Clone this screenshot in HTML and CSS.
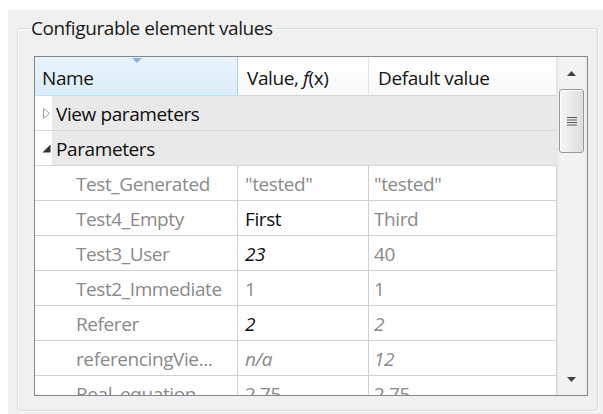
FILE: index.html
```html
<!DOCTYPE html>
<html lang="en">
<head>
<meta charset="utf-8">
<title>Configurable element values</title>
<link rel="stylesheet" href="styles.css">
</head>
<body>
<div class="window">
  <fieldset class="group">
    <legend class="group-title">Configurable element values</legend>
    <div class="group-body">
      <div class="tree">
        <div class="grid">
          <div class="hcell hcell-sorted">
            <svg class="sort-mark" width="10" height="5" viewBox="0 0 10 5"><path d="M0 0H10L5 5Z" fill="#8cb4d8"/></svg>
            <span>Name</span>
          </div>
          <div class="hcell"><span>Value, <i>f</i>(x)</span></div>
          <div class="hcell"><span>Default value</span></div>

          <div class="group-row">
            <span class="twisty">
              <svg width="9" height="13" viewBox="0 0 9 13"><path d="M1.5 1.5L7.5 6.5L1.5 11.5Z" fill="#fff" stroke="#9c9c9c"/></svg>
            </span>
            <span class="group-label">View parameters</span>
          </div>
          <div class="group-row">
            <span class="twisty">
              <svg width="9" height="9" viewBox="0 0 9 9"><path d="M8.5 0.5V8.5H0.5Z" fill="#333"/></svg>
            </span>
            <span class="group-label">Parameters</span>
          </div>

          <div class="cell name">Test_Generated</div>
          <div class="cell">"tested"</div>
          <div class="cell">"tested"</div>

          <div class="cell name">Test4_Empty</div>
          <div class="cell set">First</div>
          <div class="cell">Third</div>

          <div class="cell name">Test3_User</div>
          <div class="cell set"><i>23</i></div>
          <div class="cell">40</div>

          <div class="cell name">Test2_Immediate</div>
          <div class="cell">1</div>
          <div class="cell">1</div>

          <div class="cell name">Referer</div>
          <div class="cell set"><i>2</i></div>
          <div class="cell"><i>2</i></div>

          <div class="cell name">referencingVie...</div>
          <div class="cell"><i>n/a</i></div>
          <div class="cell"><i>12</i></div>

          <div class="cell name">Real_equation</div>
          <div class="cell">2.75</div>
          <div class="cell">2.75</div>
        </div>

        <div class="scrollbar">
          <div class="sb-button">
            <svg width="9" height="5" viewBox="0 0 9 5"><path d="M0 5L4.5 0L9 5Z" fill="#404040"/></svg>
          </div>
          <div class="sb-thumb">
            <svg width="10" height="9" viewBox="0 0 10 9">
              <path d="M0 0.5H10M0 3H10M0 5.5H10M0 8H10" stroke="#5a5a5a" stroke-width="1"/>
            </svg>
          </div>
          <div class="sb-track"></div>
          <div class="sb-button">
            <svg width="9" height="5" viewBox="0 0 9 5"><path d="M0 0L4.5 5L9 0Z" fill="#404040"/></svg>
          </div>
        </div>
      </div>
    </div>
  </fieldset>
</div>
</body>
</html>
```
FILE: styles.css
```css
html, body {
  margin: 0;
  height: 100%;
  overflow: hidden;
  background: #fff;
}

body {
  font-family: "Open Sans", "Segoe UI", "Noto Sans", sans-serif;
  font-size: 19px;
  font-weight: 500;
  letter-spacing: -0.4px;
  color: #1e1e1e;
}

/* dialog surface */
.window {
  margin: 10px 0 0 8px;
  height: 404px;
  box-sizing: border-box;
  padding: 5px 5px 3px 9px;
  background: #f0f0f0;
}

/* group box */
.group {
  margin: 0;
  padding: 0;
  min-width: 0;
  border: 1px solid #d2dce3;
  border-radius: 3px;
  box-shadow: inset 1px 1px 0 #fff, 1px 1px 0 #fff;
}

.group-title {
  margin-left: 11px;
  padding: 0 2px;
  line-height: 26px;
  color: #1a1a1a;
}

.group-body {
  padding: 15px 9px 14px 16px;
}

/* tree table */
.tree {
  display: flex;
  height: 340px;
  box-sizing: border-box;
  border: 1px solid #828790;
  background: #fff;
  overflow: hidden;
}

.grid {
  display: grid;
  grid-template-columns: 203px 131px 188px;
  grid-template-rows: 39px;
  grid-auto-rows: 35px;
  align-content: start;
  overflow: hidden;
}

.hcell {
  position: relative;
  display: flex;
  align-items: center;
  padding: 3px 0 0 9px;
  box-sizing: border-box;
  border-right: 1px solid #e3e4e6;
  border-bottom: 1px solid #d5d5d5;
  background: linear-gradient(#fff, #f8f9fa);
  color: #151515;
  white-space: nowrap;
}

.hcell-sorted {
  padding-left: 7px;
  border-right-color: #a9d2ee;
  border-bottom-color: #bfe0f4;
  background: linear-gradient(#e7f4fc 0, #e3f1fb 45%, #d9edf9 100%);
}

.sort-mark {
  position: absolute;
  left: 97px;
  top: 1px;
}

.group-row {
  grid-column: 1 / -1;
  display: flex;
  border-bottom: 1px solid #d6d6d6;
}

.twisty {
  flex: 0 0 17px;
  display: flex;
  align-items: center;
  justify-content: flex-end;
  padding-right: 1px;
  box-sizing: border-box;
  background: #fff;
}

.group-label {
  flex: 1;
  display: flex;
  align-items: center;
  padding: 2px 0 0 4px;
  background: #e9e9e9;
  color: #0e0e0e;
  white-space: nowrap;
}

.cell {
  display: flex;
  align-items: center;
  padding: 2px 0 0 5px;
  box-sizing: border-box;
  border-right: 1px solid #d0d0d0;
  border-bottom: 1px solid #d0d0d0;
  color: #8a8a8a;
  white-space: nowrap;
  overflow: hidden;
}

.cell:nth-child(3n+1) {
  padding-left: 7px;
}

.cell.name {
  padding-left: 41px;
}

.cell.set {
  color: #0e0e0e;
}

/* vertical scrollbar */
.scrollbar {
  flex: 1;
  display: flex;
  flex-direction: column;
  background: linear-gradient(90deg, #e8e8e8 0, #f3f3f3 3px, #f3f3f3 calc(100% - 3px), #e8e8e8 100%);
}

.sb-button {
  flex: 0 0 32px;
  display: flex;
  align-items: center;
  justify-content: center;
  padding-right: 2px;
}

.sb-thumb {
  flex: 0 0 64px;
  margin: 0 3px 0 2px;
  box-sizing: border-box;
  border: 1px solid #989898;
  border-radius: 3px;
  background: linear-gradient(90deg, #f6f6f6 0, #ececec 45%, #dcdcdc 100%);
  box-shadow: inset 1px 1px 0 #fff;
  display: flex;
  align-items: center;
  justify-content: center;
}

.sb-track {
  flex: 1;
}
```
